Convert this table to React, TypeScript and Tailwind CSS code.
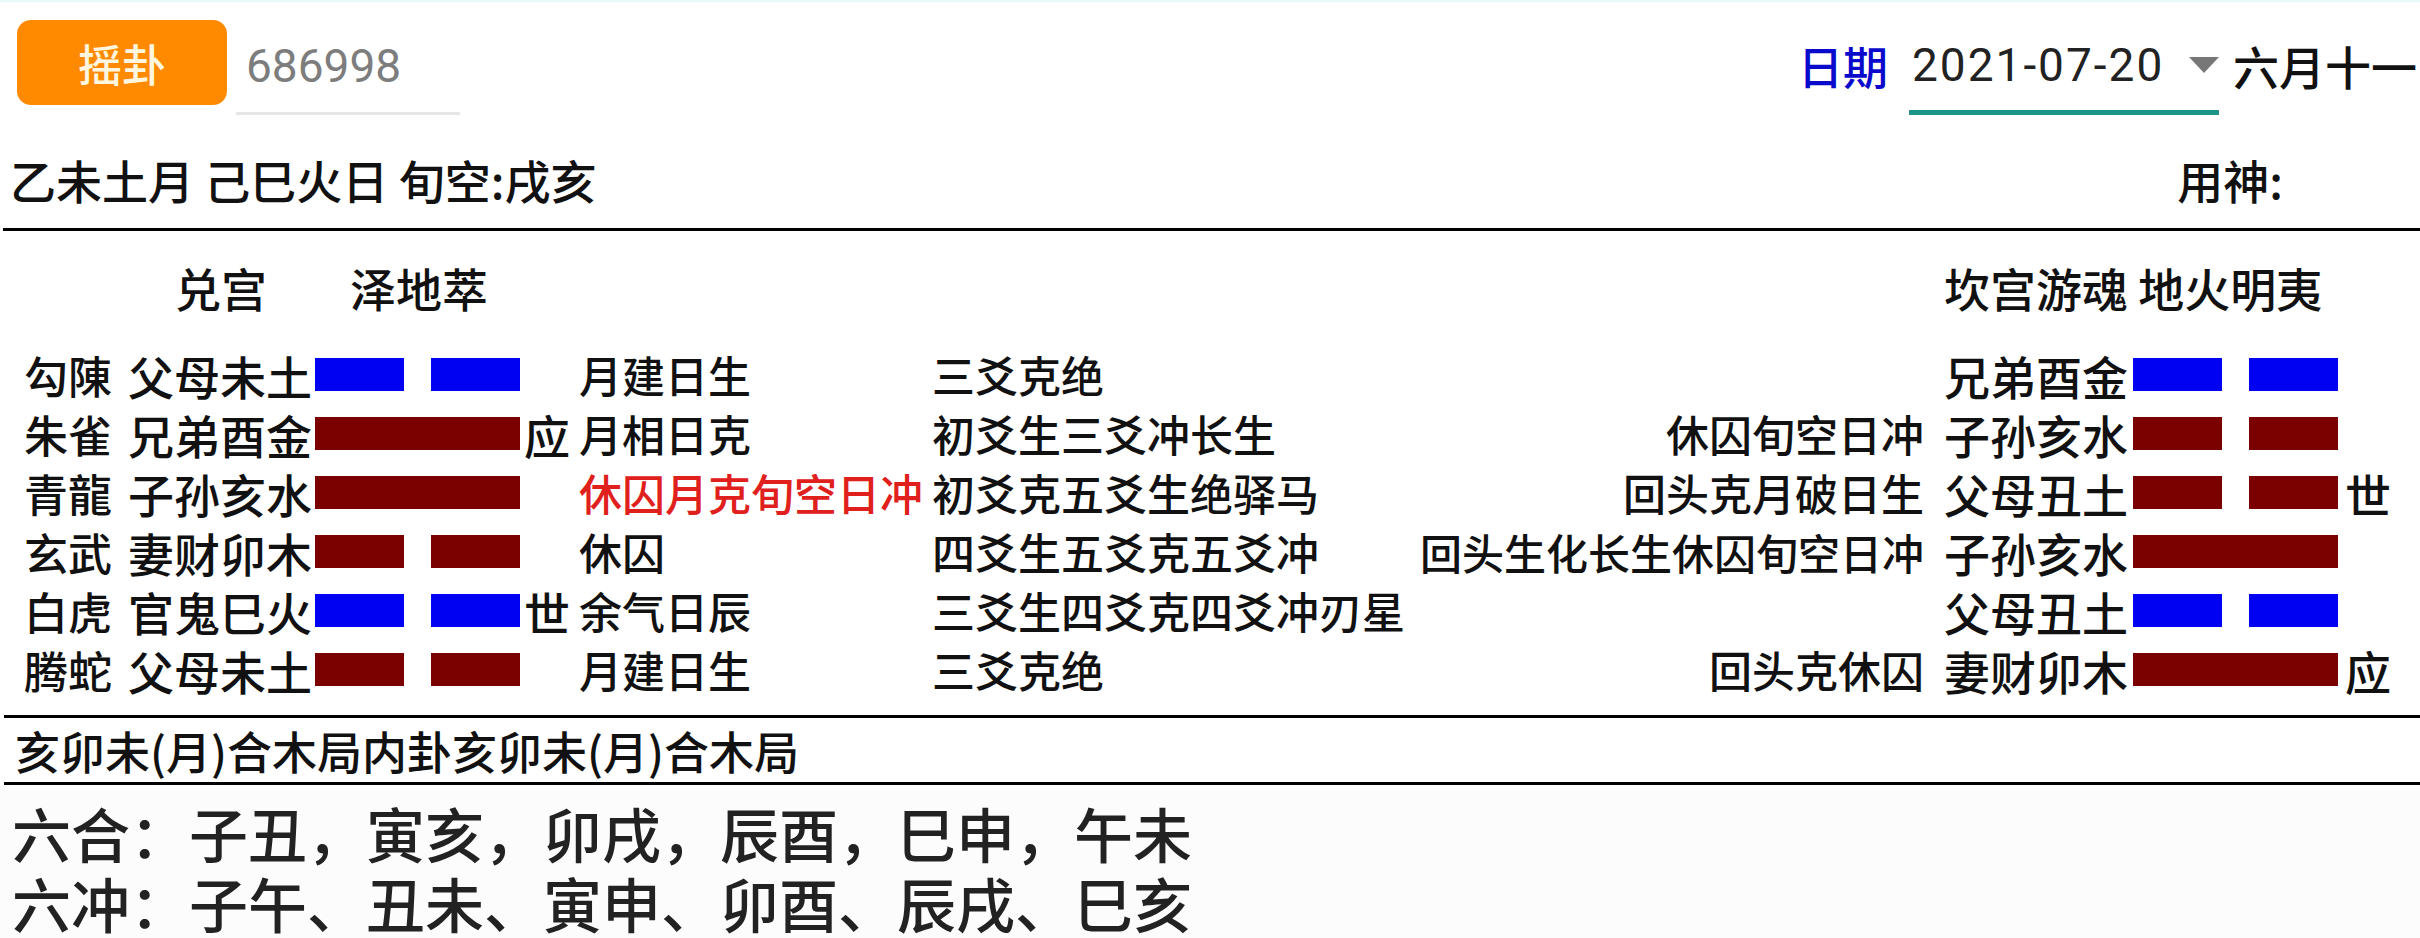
import React from "react";

// --- Types ---
interface YaoRow {
  god?: string;
  name: string;
  yang: boolean;
  blue: boolean;
  mark?: string;
  note1?: string;
  note1Red?: boolean;
  note2?: string;
}

// --- Data ---
const mainGua: YaoRow[] = [
  { god: "勾陳", name: "父母未土", yang: false, blue: true, note1: "月建日生", note2: "三爻克绝" },
  { god: "朱雀", name: "兄弟酉金", yang: true, blue: false, mark: "应", note1: "月相日克", note2: "初爻生三爻冲长生" },
  { god: "青龍", name: "子孙亥水", yang: true, blue: false, note1: "休囚月克旬空日冲", note1Red: true, note2: "初爻克五爻生绝驿马" },
  { god: "玄武", name: "妻财卯木", yang: false, blue: false, note1: "休囚", note2: "四爻生五爻克五爻冲" },
  { god: "白虎", name: "官鬼巳火", yang: false, blue: true, mark: "世", note1: "余气日辰", note2: "三爻生四爻克四爻冲刃星" },
  { god: "腾蛇", name: "父母未土", yang: false, blue: false, note1: "月建日生", note2: "三爻克绝" },
];

const changedGua: YaoRow[] = [
  { name: "兄弟酉金", yang: false, blue: true },
  { name: "子孙亥水", yang: false, blue: false, note1: "休囚旬空日冲" },
  { name: "父母丑土", yang: false, blue: false, mark: "世", note1: "回头克月破日生" },
  { name: "子孙亥水", yang: true, blue: false, note1: "回头生化长生休囚旬空日冲" },
  { name: "父母丑土", yang: false, blue: true },
  { name: "妻财卯木", yang: true, blue: false, mark: "应", note1: "回头克休囚" },
];

// --- Bar ---
function YaoBar({ yang, blue }: { yang: boolean; blue: boolean }) {
  const color = blue ? "bg-[#0000f2]" : "bg-[#7b0000]";
  if (yang) {
    return <div className={`h-[33px] w-[205px] shrink-0 ${color}`} />;
  }
  return (
    <div className="flex w-[205px] shrink-0 justify-between">
      <div className={`h-[33px] w-[89px] ${color}`} />
      <div className={`h-[33px] w-[89px] ${color}`} />
    </div>
  );
}

// --- Main App ---
export default function App() {
  return (
    <div className="flex h-[938px] w-full flex-col overflow-hidden bg-white font-['Noto_Sans_CJK_SC',sans-serif] font-medium text-[#111]">
      <div className="h-[2px] bg-[#e8faf7]" />

      {/* Top bar */}
      <div className="flex items-start justify-between">
        <div className="flex items-start pl-[17px] pt-[18px]">
          <button className="flex h-[85px] w-[210px] items-center justify-center rounded-[14px] bg-[#ff8a00] text-[44px] leading-none text-[#fff6df]">
            摇卦
          </button>
          <div className="ml-[9px] flex h-[95px] w-[224px] items-center border-b-[3px] border-[#e6e6e6] pl-[10px] font-['Roboto',sans-serif] text-[46px] font-normal leading-none text-[#7d7d7d]">
            686998
          </div>
        </div>

        <div className="mt-[18px] flex h-[95px] items-stretch pr-[3px]">
          <div className="mr-[21px] flex items-center pb-[5px] text-[45px] leading-none text-[#0a0acc]">日期</div>
          <div className="flex w-[310px] items-center justify-between border-b-[5px] border-[#1d9485] pl-[3px]">
            <span className="font-['Roboto',sans-serif] text-[46px] font-normal leading-none tracking-[2px] text-[#222]">2021-07-20</span>
            <div className="h-0 w-0 border-l-[15px] border-r-[15px] border-t-[16px] border-l-transparent border-r-transparent border-t-[#777]" />
          </div>
          <div className="ml-[14px] flex items-center pb-[5px] text-[46px] leading-none">六月十一</div>
        </div>
      </div>

      {/* Date info */}
      <div className="flex h-[113px] items-center justify-between pl-[10px] pr-[137px] pt-[14px] text-[46px] leading-none">
        <span>乙未土月 己巳火日 旬空:戌亥</span>
        <span>用神:</span>
      </div>
      <div className="ml-[3px] h-[3px] bg-black" />

      {/* Hexagrams */}
      <div className="flex pr-[20px]">
        <div className="flex flex-col pl-[24px]">
          <div className="mt-[26px] flex h-[59px] items-center pl-[151px] text-[46px] leading-none">
            <span>兑宫</span>
            <span className="ml-[83px]">泽地萃</span>
          </div>
          <div className="mt-[29px] flex flex-col">
            {mainGua.map((row, i) => (
              <div key={i} className="flex h-[59px] items-center leading-none">
                <div className="w-[104px] shrink-0 text-[44px]">{row.god}</div>
                <div className="w-[187px] shrink-0 text-[46px]">{row.name}</div>
                <YaoBar yang={row.yang} blue={row.blue} />
                <div className="w-[59px] shrink-0 pl-[4px] text-[46px]">{row.mark}</div>
                <div className={`w-[353px] shrink-0 whitespace-nowrap text-[43px] ${row.note1Red ? "text-[#e0201c]" : ""}`}>
                  {row.note1}
                </div>
                <div className="w-[450px] shrink-0 whitespace-nowrap text-[43px]">{row.note2}</div>
              </div>
            ))}
          </div>
        </div>

        <div className="ml-auto flex flex-col">
          <div className="mt-[26px] flex h-[59px] items-center whitespace-nowrap pl-[560px] text-[46px] leading-none">
            坎宫游魂 地火明夷
          </div>
          <div className="mt-[29px] flex flex-col">
            {changedGua.map((row, i) => (
              <div key={i} className="flex h-[59px] items-center leading-none">
                <div
                  className={`w-[560px] shrink-0 whitespace-nowrap pr-[20px] text-right ${
                    row.note1 && row.note1.length > 10 ? "text-[42px]" : "text-[43px]"
                  }`}
                >
                  {row.note1}
                </div>
                <div className="w-[189px] shrink-0 text-[46px]">{row.name}</div>
                <YaoBar yang={row.yang} blue={row.blue} />
                <div className="w-[62px] shrink-0 pl-[7px] text-[46px]">{row.mark}</div>
              </div>
            ))}
          </div>
        </div>
      </div>

      {/* Combination */}
      <div className="ml-[4px] mt-[16px] h-[3px] bg-black" />
      <div className="flex h-[64px] items-center pl-[15px] text-[45px] leading-none">
        亥卯未(月)合木局内卦亥卯未(月)合木局
      </div>
      <div className="ml-[4px] h-[3px] bg-black" />

      {/* Reference */}
      <div className="flex flex-1 flex-col bg-[#fcfcfc] pl-[12px] pt-[12px] text-[59px] leading-none text-[#222]">
        <div className="flex h-[70px] items-center">六合：子丑，寅亥，卯戌，辰酉，巳申，午未</div>
        <div className="flex h-[70px] items-center">六冲：子午、丑未、寅申、卯酉、辰戌、巳亥</div>
      </div>
    </div>
  );
}
